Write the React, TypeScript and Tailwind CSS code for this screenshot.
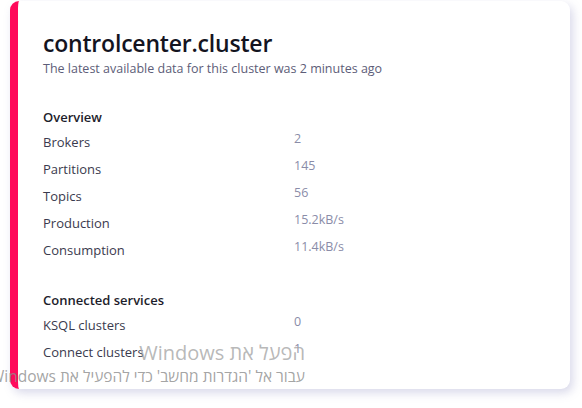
import React from "react";

const overview: [string, string][] = [
  ["Brokers", "2"],
  ["Partitions", "145"],
  ["Topics", "56"],
  ["Production", "15.2kB/s"],
  ["Consumption", "11.4kB/s"],
];

const services: [string, string][] = [
  ["KSQL clusters", "0"],
  ["Connect clusters", "1"],
];

function Row({ label, value }: { label: string; value: string }) {
  return (
    <div className="grid grid-cols-[251px_1fr] h-[27px] items-start">
      <div className="text-[13px] leading-[18px] pt-[7px] text-[#3a3a4e]">{label}</div>
      <div className="text-[12.5px] leading-[18px] pt-[4px] text-[#8a8ca8]">{value}</div>
    </div>
  );
}

export default function App() {
  return (
    <div
      className="relative w-[582px] h-[408px] overflow-hidden bg-white"
      style={{ fontFamily: '"Open Sans", "Noto Sans", sans-serif' }}
    >
      <div className="ml-[10px] mt-[1px] w-[560px] h-[388px] rounded-[9px] border-l-8 border-[#ff0a5b] bg-white shadow-[3px_4px_10px_rgba(120,120,180,0.28)] pl-[25px] pt-[27px]">
        <div className="text-[23px] leading-[30px] font-semibold text-[#14141f] tracking-[-0.2px]">
          controlcenter.cluster
        </div>
        <div className="text-[12.5px] leading-[18px] text-[#5d5d78] mt-[2px]">
          The latest available data for this cluster was 2 minutes ago
        </div>

        <div className="mt-[30px] text-[13px] leading-[18px] font-semibold text-[#1d1d2b]">Overview</div>
        <div>
          {overview.map(([l, v]) => (
            <Row key={l} label={l} value={v} />
          ))}
        </div>

        <div className="mt-[30px] text-[13px] leading-[18px] font-semibold text-[#1d1d2b]">Connected services</div>
        <div>
          {services.map(([l, v]) => (
            <Row key={l} label={l} value={v} />
          ))}
        </div>
      </div>

      <div
        dir="rtl"
        className="absolute right-[277px] top-[340px] text-right whitespace-nowrap pointer-events-none"
      >
        <div className="text-[20px] leading-[26px] text-[#a6a6a6]/80">הפעל את Windows</div>
        <div className="text-[15.5px] leading-[20px] text-[#8d8d8d]/80 mt-[0px]">
          עבור אל 'הגדרות מחשב' כדי להפעיל את Windows
        </div>
      </div>
    </div>
  );
}
